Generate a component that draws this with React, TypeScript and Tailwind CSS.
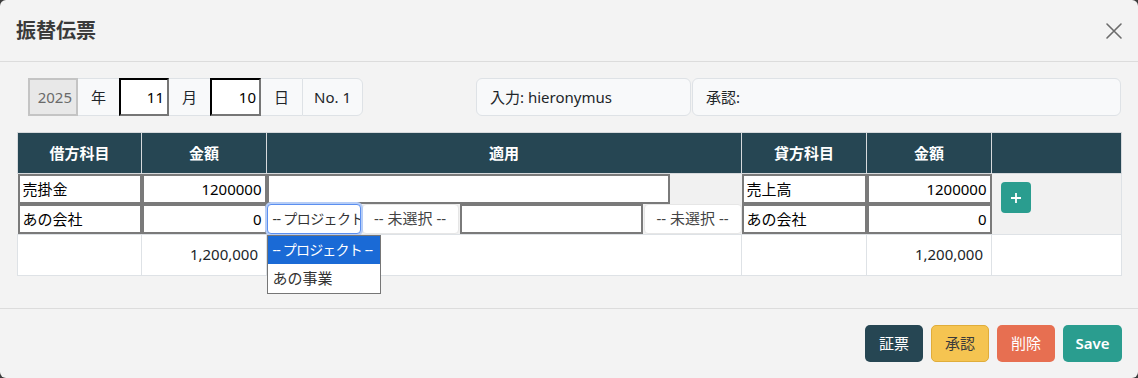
import React from "react";

const inputCls =
  "block w-full h-full bg-white border-2 border-[#7a7a7a] px-[3px] text-[15px] text-black outline-none";

function CloseIcon() {
  return (
    <svg width="18" height="18" viewBox="0 0 18 18" fill="none">
      <path d="M2 2L16 16M16 2L2 16" stroke="#6b6b6b" strokeWidth="1.6" strokeLinecap="round" />
    </svg>
  );
}

export default function App() {
  return (
    <div className="w-[1138px] h-[378px] bg-[#3c3c3c] font-['Noto_Sans','Noto_Sans_CJK_JP',sans-serif] text-[#212529]">
      <div className="w-full h-full bg-[#f3f3f3] rounded-[6px] flex flex-col">
        {/* header */}
        <div className="h-[62px] shrink-0 border-b border-[#dcdcdc] flex items-center justify-between pl-4 pr-[15px]">
          <h1 className="text-[20px] font-bold text-[#3a3a3a]">振替伝票</h1>
          <CloseIcon />
        </div>

        {/* body */}
        <div className="flex-1 px-[17px] pt-4">
          <div className="flex items-center h-[38px]">
            <div className="ml-[11px] flex h-[38px] text-[15px]">
              <div className="w-[50px] bg-[#e8e8e8] border-2 border-[#c4c4c4] flex items-center justify-end pr-[4px] text-[#6a6a6a]">2025</div>
              <div className="w-[41px] bg-[#f8f9fa] border-y border-[#dee2e6] flex items-center justify-center">年</div>
              <div className="w-[50px] bg-white border-2 border-t-black border-l-black border-b-[#767676] border-r-[#767676] flex items-center justify-end pr-[3px] text-black">11</div>
              <div className="w-[41px] bg-[#f8f9fa] border-y border-[#dee2e6] flex items-center justify-center">月</div>
              <div className="w-[51px] bg-white border-2 border-t-black border-l-black border-b-[#767676] border-r-[#767676] flex items-center justify-end pr-[3px] text-black">10</div>
              <div className="w-[41px] bg-[#f8f9fa] border-y border-[#dee2e6] flex items-center justify-center">日</div>
              <div className="w-[61px] bg-[#f8f9fa] border border-[#dee2e6] rounded-r-[6px] flex items-center justify-center">No. 1</div>
            </div>
            <div className="ml-[113px] w-[215px] h-[38px] bg-[#f8f9fa] border border-[#dee2e6] rounded-[6px] flex items-center pl-[13px] text-[15px]">入力: hieronymus</div>
            <div className="ml-px w-[429px] h-[38px] bg-[#f8f9fa] border border-[#dee2e6] rounded-[6px] flex items-center pl-[13px] text-[15px]">承認:</div>
          </div>

          <table className="mt-4 w-[1104px] border-collapse table-fixed text-[15px]">
            <colgroup>
              <col className="w-[124px]" />
              <col className="w-[125px]" />
              <col className="w-[475px]" />
              <col className="w-[125px]" />
              <col className="w-[125px]" />
              <col className="w-[130px]" />
            </colgroup>
            <thead>
              <tr className="h-[41px] bg-[#264653] text-white">
                {["借方科目", "金額", "適用", "貸方科目", "金額", ""].map((h, i) => (
                  <th key={i} className="h-[41px] p-0 border border-[#d6d9dc] font-bold text-[15px] text-center">{h}</th>
                ))}
              </tr>
            </thead>
            <tbody>
              <tr className="h-[30px] bg-[#f1f1f1]">
                <td className="p-0 h-[30px]"><input className={inputCls} defaultValue="売掛金" readOnly /></td>
                <td className="p-0 h-[30px]"><input className={inputCls + " text-right"} defaultValue="1200000" readOnly /></td>
                <td className="p-0 h-[30px]"><input className={inputCls + " !w-[403px]"} defaultValue="" readOnly /></td>
                <td className="p-0 h-[30px]"><input className={inputCls} defaultValue="売上高" readOnly /></td>
                <td className="p-0 h-[30px]"><input className={inputCls + " text-right"} defaultValue="1200000" readOnly /></td>
                <td rowSpan={2} className="p-0 align-top border-r border-[#dee2e6]">
                  <div className="mt-[8px] ml-[9px] w-[30px] h-[31px] rounded-[4px] bg-[#2a9d8f] flex items-center justify-center">
                    <svg width="12" height="12" viewBox="0 0 12 12"><path d="M6 1V11M1 6H11" stroke="white" strokeWidth="1.8" /></svg>
                  </div>
                </td>
              </tr>
              <tr className="h-[30px] bg-[#f1f1f1]">
                <td className="p-0 h-[30px]"><input className={inputCls} defaultValue="あの会社" readOnly /></td>
                <td className="p-0 h-[30px]"><input className={inputCls + " text-right"} defaultValue="0" readOnly /></td>
                <td className="p-0 h-[30px] border-b border-[#dee2e6]">
                  <div className="relative flex h-[30px] gap-px">
                    <div className="relative w-[94px] h-full bg-white rounded-[4px] border border-[#5b8ff0] ring-[2px] ring-[#b6cdf6] overflow-hidden whitespace-nowrap flex items-center pl-[5px] text-[14px] tracking-[-0.6px] text-[#333]">-- プロジェクト --</div>
                    <div className="w-[97px] h-full bg-white rounded-[4px] border border-[#e6e6e6] whitespace-nowrap flex items-center justify-center text-[#444]">-- 未選択 --</div>
                    <div className="w-[183px] h-full"><input className={inputCls} defaultValue="" readOnly /></div>
                    <div className="w-[98px] h-full bg-white rounded-[4px] border border-[#e6e6e6] whitespace-nowrap flex items-center justify-center text-[#444]">-- 未選択 --</div>
                    <div className="absolute left-0 top-[31px] w-[114px] bg-white border border-[#767676] z-10">
                      <div className="h-[28px] bg-[#1a6ad6] text-white flex items-center pl-[5px] whitespace-nowrap text-[14px] tracking-[-0.8px]">-- プロジェクト --</div>
                      <div className="h-[29px] text-[#333] flex items-center pl-[5px] whitespace-nowrap text-[15px]">あの事業</div>
                    </div>
                  </div>
                </td>
                <td className="p-0 h-[30px]"><input className={inputCls} defaultValue="あの会社" readOnly /></td>
                <td className="p-0 h-[30px]"><input className={inputCls + " text-right"} defaultValue="0" readOnly /></td>
              </tr>
              <tr className="h-[41px] bg-white">
                <td className="border border-[#dee2e6]"></td>
                <td className="border border-[#dee2e6] text-right pr-[8px]">1,200,000</td>
                <td className="border border-[#dee2e6]"></td>
                <td className="border border-[#dee2e6]"></td>
                <td className="border border-[#dee2e6] text-right pr-[8px]">1,200,000</td>
                <td className="border border-[#dee2e6]"></td>
              </tr>
            </tbody>
          </table>
        </div>

        {/* footer */}
        <div className="h-[70px] shrink-0 border-t border-[#dcdcdc] flex items-center justify-end gap-2 pr-4 text-[15px]">
          <button className="w-[58px] h-[37px] rounded-[5px] bg-[#264653] text-white">証票</button>
          <button className="w-[58px] h-[37px] rounded-[5px] bg-[#f5c451] border border-[#e0ad3a] text-[#3a3a3a]">承認</button>
          <button className="w-[58px] h-[37px] rounded-[5px] bg-[#e76f51] text-white">削除</button>
          <button className="w-[59px] h-[37px] rounded-[5px] bg-[#2a9d8f] text-white font-semibold">Save</button>
        </div>
      </div>
    </div>
  );
}
